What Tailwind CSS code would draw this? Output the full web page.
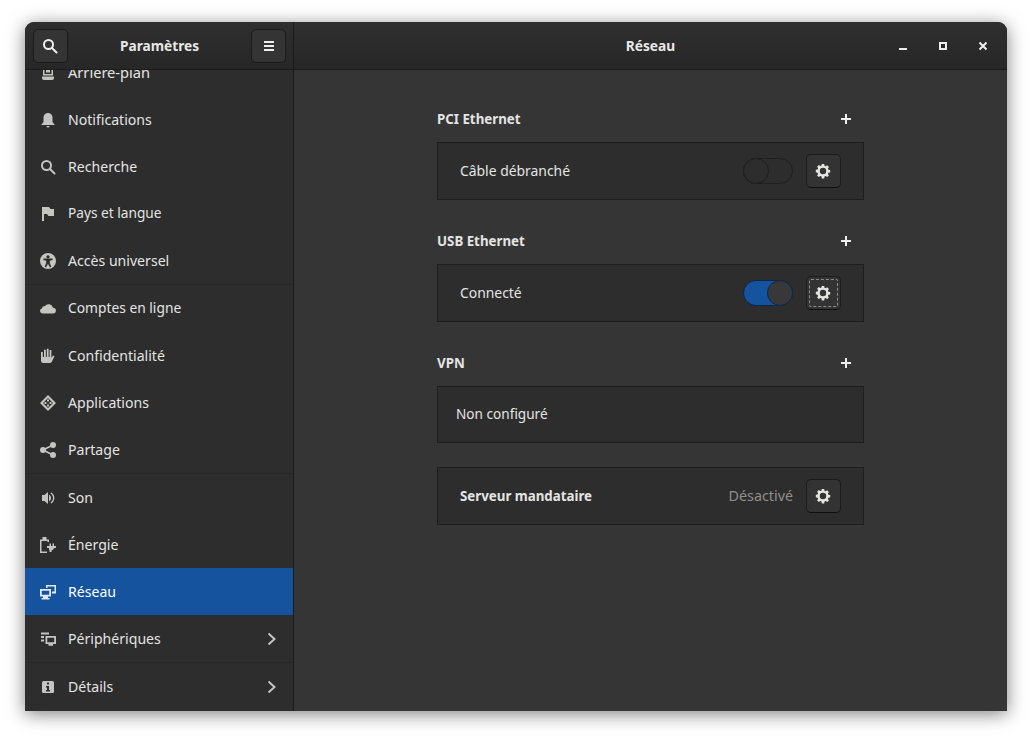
<!DOCTYPE html>
<html lang="fr"><head><meta charset="utf-8"><title>Réseau</title>
<script src="https://cdn.jsdelivr.net/npm/@tailwindcss/browser@4"></script></head>
<body class="w-[1032px] h-[739px] bg-white overflow-hidden pt-[22px] pl-[25px] font-['Noto_Sans',sans-serif] text-[14.1px] text-[#e4e4e2]">
<div class="w-[982px] h-[689px] flex flex-col rounded-t-[9px] overflow-hidden bg-[#353535] shadow-[0_3px_18px_rgba(0,0,0,0.5)]">
  <header class="h-[48px] shrink-0 flex border-b border-[#1b1b1b] bg-gradient-to-b from-[#2f2f2f] to-[#272727]">
    <div class="w-[269px] shrink-0 flex items-center justify-between pl-[8px] pr-[7px] border-r border-[#1b1b1b]">
      <button class="w-[35px] h-[34px] flex items-center justify-center rounded-[5px] border border-[#1b1b1b] bg-[#343434]">
        <svg class="w-4 h-4 -ml-px" viewBox="0 0 16 16" fill="none" stroke="#eee" stroke-width="2"><circle cx="6.500" cy="6.500" r="4.500"/><path d="M10 10l4.500 4.500" stroke-linecap="round"/></svg>
      </button>
      <span class="font-bold text-[13.7px] pt-[2px] text-[#e8e8e6]">Paramètres</span>
      <button class="w-[35px] h-[34px] flex items-center justify-center rounded-[5px] border border-[#1b1b1b] bg-[#343434]">
        <svg class="w-4 h-4" viewBox="0 0 16 16" fill="#eee"><path d="M3 3h10v2H3zM3 7h10v2H3zM3 11h10v2H3z"/></svg>
      </button>
    </div>
    <div class="flex-1 relative flex items-center justify-center">
      <span class="font-bold text-[13.7px] pt-[2px] text-[#e8e8e6]">Réseau</span>
      <div class="absolute right-[16px] top-0 h-full flex items-center gap-[24px]">
        <svg class="w-4 h-4" viewBox="0 0 16 16" fill="#eee"><path d="M4 10h8v2H4z"/></svg>
        <svg class="w-4 h-4" viewBox="0 0 16 16" fill="none" stroke="#eee" stroke-width="2"><path d="M5 5h6v6H5z"/></svg>
        <svg class="w-4 h-4" viewBox="0 0 16 16" fill="none" stroke="#eee" stroke-width="2"><path d="M4.500 4.500l7 7M11.500 4.500l-7 7"/></svg>
      </div>
    </div>
  </header>
  <div class="flex-1 flex min-h-0">
    <aside class="w-[268px] shrink-0 bg-[#2d2d2d] overflow-hidden">
      <ul class="-mt-[21px]">
        <li class="h-[47px] flex items-center pl-[15px] pr-[13px] gap-[12px]"><svg class="w-4 h-4 shrink-0" viewBox="0 0 16 16" fill="#c4c4c2"><path fill-rule="evenodd" d="M3 1h10v9.500H3zM4.500 2.500v6.500h7V2.500z"/><path d="M6 4h4v3.500H6zM2 11.500h12V13a2 2 0 0 1-2 2H4a2 2 0 0 1-2-2z"/></svg><span class="text-[14.6px]">Arrière-plan</span></li>
        <li class="h-[47px] flex items-center pl-[15px] pr-[13px] gap-[12px]"><svg class="w-4 h-4 shrink-0" viewBox="0 0 16 16" fill="#c4c4c2"><path d="M8 1a4.500 4.500 0 0 1 4.500 4.500V10l2 2.500v.5H1.500v-.5l2-2.500V5.500A4.500 4.500 0 0 1 8 1zM6.500 14h3a1.500 1.500 0 0 1-3 0z"/></svg><span>Notifications</span></li>
        <li class="h-[47px] flex items-center pl-[15px] pr-[13px] gap-[12px]"><svg class="w-4 h-4 shrink-0" viewBox="0 0 16 16" fill="none" stroke="#c4c4c2" stroke-width="2"><circle cx="6.500" cy="6.500" r="4.500"/><path d="M10 10l4.500 4.500" stroke-linecap="round"/></svg><span>Recherche</span></li>
        <li class="h-[47px] flex items-center pl-[15px] pr-[13px] gap-[12px]"><svg class="w-4 h-4 shrink-0" viewBox="0 0 16 16" fill="#c4c4c2"><path d="M2 1h7l1.500 2H14v7H8.500L7 8H4v7H2z"/></svg><span class="text-[13.7px]">Pays et langue</span></li>
        <li class="h-[47px] flex items-center pl-[15px] pr-[13px] gap-[12px]"><svg class="w-4 h-4 shrink-0" viewBox="0 0 16 16"><circle cx="8" cy="8" r="8" fill="#c4c4c2"/><circle cx="8" cy="3.800" r="1.600" fill="#2d2d2d"/><path d="M3.500 5.500h9v1.400L9.800 7.700V10l1.500 3.800-1.400.5L8 10.800l-1.900 3.500-1.400-.5L6.200 10V7.700L3.500 6.900z" fill="#2d2d2d"/></svg><span>Accès universel</span></li>
        <li class="h-px bg-[#292929]"></li>
        <li class="h-[47px] flex items-center pl-[15px] pr-[13px] gap-[12px]"><svg class="w-4 h-4 shrink-0" viewBox="0 0 16 16" fill="#c4c4c2"><path d="M2.500 14A2.500 2.500 0 0 1 1.800 9.100 3 3 0 0 1 5 6.500 4.500 4.500 0 0 1 13 8.200 2.900 2.900 0 0 1 13 14z" transform="translate(0 -1.500)"/></svg><span class="text-[13.8px]">Comptes en ligne</span></li>
        <li class="h-[47px] flex items-center pl-[15px] pr-[13px] gap-[12px]"><svg class="w-4 h-4 shrink-0" viewBox="0 0 16 16" fill="#c4c4c2"><path d="M1 4h1.800v5H4V1.800h1.800V9h1V.800h1.800V9h1V2h1.800v8l1.600-2.500 1.500.8-2.500 5.200A2.500 2.500 0 0 1 9.700 15H3.500A2.500 2.500 0 0 1 1 12.500z"/></svg><span>Confidentialité</span></li>
        <li class="h-[47px] flex items-center pl-[15px] pr-[13px] gap-[12px]"><svg class="w-4 h-4 shrink-0" viewBox="0 0 16 16" fill="#c4c4c2"><path fill-rule="evenodd" d="M8 0l8 8-8 8-8-8zM8 3L3 8l5 5 5-5z"/><path d="M7 4.500h2v2H7zM9.500 7h2v2h-2zM4.500 7h2v2h-2zM7 9.500h2v2H7z"/></svg><span>Applications</span></li>
        <li class="h-[47px] flex items-center pl-[15px] pr-[13px] gap-[12px]"><svg class="w-4 h-4 shrink-0" viewBox="0 0 16 16" fill="#c4c4c2"><circle cx="3" cy="8" r="3"/><circle cx="13" cy="3" r="3"/><circle cx="13" cy="13" r="3"/><path d="M3 8l10-5M3 8l10 5" stroke="#c4c4c2" stroke-width="1.500"/></svg><span>Partage</span></li>
        <li class="h-px bg-[#292929]"></li>
        <li class="h-[47px] flex items-center pl-[15px] pr-[13px] gap-[12px]"><svg class="w-4 h-4 shrink-0" viewBox="0 0 16 16" fill="#c4c4c2"><path d="M2 5h2.500L8 2v12L4.500 11H2zM9 4.500a4 4 0 0 1 0 7zM11.300 2.500a6.500 6.500 0 0 1 0 11l-.8-1a5.300 5.300 0 0 0 0-9z"/></svg><span>Son</span></li>
        <li class="h-[47px] flex items-center pl-[15px] pr-[13px] gap-[12px]"><svg class="w-4 h-4 shrink-0" viewBox="0 0 16 16" fill="#c4c4c2"><path d="M0 2.500h2.500V0h4v2.500H9V5H7.500V4h-6v10.500H7V16H0z"/><path d="M7 9h2.500V6.500H11V9h1.500V6.500H14V9h2v2h-2a3 3 0 0 1-2.500 2.500V15h-2v-1.500A3 3 0 0 1 9 11H7z"/></svg><span>Énergie</span></li>
        <li class="h-[47px] flex items-center pl-[15px] pr-[13px] gap-[12px] bg-[#15539e] text-white"><svg class="w-4 h-4 shrink-0" viewBox="0 0 16 16" fill="#dfe7f2"><path d="M6 1h10v8.500h-4V7.500h2.500v-5h-7V4H6z"/><path fill-rule="evenodd" d="M0 5h11v7.500H8V14h1.500v1.500h-8V14H3v-1.500H0zM1.800 6.800v4h7.400v-4z"/></svg><span>Réseau</span></li>
        <li class="h-[47px] flex items-center pl-[15px] pr-[13px] gap-[12px]"><svg class="w-4 h-4 shrink-0" viewBox="0 0 16 16" fill="#c4c4c2"><path d="M1 1.500h8v2H1zM1 5h3v2H1zM1 8.500h3v2H1z"/><path fill-rule="evenodd" d="M5.500 5H16v8h-3v1.800H8.500V13h-3zM7.300 6.800v4.400h6.900V6.800z"/></svg><span class="flex-1">Périphériques</span><svg class="w-4 h-4 shrink-0" viewBox="0 0 16 16" fill="none" stroke="#c4c4c2" stroke-width="2"><path d="M4.500 2.500 10.500 8l-6 5.500"/></svg></li>
        <li class="h-px bg-[#292929]"></li>
        <li class="h-[47px] flex items-center pl-[15px] pr-[13px] gap-[12px]"><svg class="w-4 h-4 shrink-0" viewBox="0 0 16 16"><rect x="2" y="2" width="12" height="12" rx="1.500" fill="#c4c4c2"/><path d="M7 3.500h2v2H7zM6 7h3v4h1v1.500H6V11h1V8.500H6z" fill="#2d2d2d"/></svg><span class="flex-1">Détails</span><svg class="w-4 h-4 shrink-0" viewBox="0 0 16 16" fill="none" stroke="#c4c4c2" stroke-width="2"><path d="M4.500 2.500 10.500 8l-6 5.500"/></svg></li>
      </ul>
    </aside>
    <div class="w-px shrink-0 bg-[#1b1b1b]"></div>
    <main class="flex-1 pt-[37px] pl-[143px] text-[13.9px]">
      <div class="w-[427px] flex flex-col">
        <div class="h-[24px] flex items-center justify-between font-bold pr-[10px]"><span class="text-[13.3px] pt-[2px]">PCI Ethernet</span><svg class="w-4 h-4" viewBox="0 0 16 16" fill="#eee"><path d="M7 3h2v4h4v2H9v4H7V9H3V7h4z"/></svg></div>
        <div class="mt-[11px] h-[58px] flex items-center border border-[#1e1e1e] bg-[#2d2d2d] pl-[22px] pr-[22px]">
          <span class="flex-1">Câble débranché</span>
          <div class="w-[50px] h-[26px] rounded-full border border-[#1f1f1f] bg-[#2d2d2d] relative"><div class="absolute -left-px -top-px w-[26px] h-[26px] rounded-full border border-[#1f1f1f] bg-[#2d2d2d]"></div></div>
          <button class="ml-[13px] w-[35px] h-[34px] flex items-center justify-center rounded-[5px] border border-[#1b1b1b] border-b-[#0f0f0f] bg-[#333333]"><svg class="w-4 h-4 -ml-px" viewBox="0 0 16 16" fill="#e4e4e2"><path fill-rule="evenodd" d="M6.800 1h2.400l.3 1.800 1.200.5 1.500-1 1.700 1.700-1 1.500.5 1.200 1.800.3v2.400l-1.800.3-.5 1.200 1 1.500-1.700 1.700-1.500-1-1.200.5-.3 1.800H6.800l-.3-1.800-1.200-.5-1.500 1-1.700-1.700 1-1.500-.5-1.200L.8 9.200V6.800l1.800-.3.500-1.200-1-1.500 1.700-1.700 1.500 1 1.200-.5zM8 4.800a3.200 3.200 0 1 0 0 6.400 3.200 3.200 0 0 0 0-6.400z"/></svg></button>
        </div>
        <div class="mt-[29px] h-[24px] flex items-center justify-between font-bold pr-[10px]"><span class="text-[13.3px] pt-[2px]">USB Ethernet</span><svg class="w-4 h-4" viewBox="0 0 16 16" fill="#eee"><path d="M7 3h2v4h4v2H9v4H7V9H3V7h4z"/></svg></div>
        <div class="mt-[11px] h-[58px] flex items-center border border-[#1e1e1e] bg-[#2d2d2d] pl-[22px] pr-[22px]">
          <span class="flex-1">Connecté</span>
          <div class="w-[50px] h-[26px] rounded-full border border-[#0d2547] bg-[#15539e] relative"><div class="absolute -right-px -top-px w-[26px] h-[26px] rounded-full border border-[#0d2547] bg-[#383838]"></div></div>
          <button class="ml-[13px] w-[35px] h-[34px] p-[2px] rounded-[5px] border border-[#1b1b1b] border-b-[#0f0f0f] bg-[#333333]"><span class="w-full h-full flex items-center justify-center rounded-[2px] border border-dashed border-[#8a8a8a]"><svg class="w-4 h-4 -ml-px" viewBox="0 0 16 16" fill="#e4e4e2"><path fill-rule="evenodd" d="M6.800 1h2.400l.3 1.800 1.200.5 1.500-1 1.700 1.700-1 1.500.5 1.200 1.800.3v2.400l-1.800.3-.5 1.200 1 1.500-1.700 1.700-1.500-1-1.200.5-.3 1.800H6.800l-.3-1.800-1.200-.5-1.500 1-1.700-1.700 1-1.500-.5-1.200L.8 9.200V6.800l1.800-.3.500-1.200-1-1.500 1.700-1.700 1.500 1 1.200-.5zM8 4.800a3.200 3.200 0 1 0 0 6.400 3.200 3.200 0 0 0 0-6.400z"/></svg></span></button>
        </div>
        <div class="mt-[29px] h-[24px] flex items-center justify-between font-bold pr-[10px]"><span class="text-[13.3px] pt-[2px]">VPN</span><svg class="w-4 h-4" viewBox="0 0 16 16" fill="#eee"><path d="M7 3h2v4h4v2H9v4H7V9H3V7h4z"/></svg></div>
        <div class="mt-[11px] h-[57px] flex items-center border border-[#1e1e1e] bg-[#2d2d2d] pl-[18px] text-[13.6px]">Non configuré</div>
        <div class="mt-[24px] h-[58px] flex items-center border border-[#1e1e1e] bg-[#2d2d2d] pl-[22px] pr-[22px]">
          <span class="flex-1 font-bold text-[13.3px] pt-[2px]">Serveur mandataire</span>
          <span class="text-[#8f8f8d] text-[14.3px]">Désactivé</span>
          <button class="ml-[13px] w-[35px] h-[34px] flex items-center justify-center rounded-[5px] border border-[#1b1b1b] border-b-[#0f0f0f] bg-[#333333]"><svg class="w-4 h-4 -ml-px" viewBox="0 0 16 16" fill="#e4e4e2"><path fill-rule="evenodd" d="M6.800 1h2.400l.3 1.800 1.200.5 1.500-1 1.700 1.700-1 1.500.5 1.200 1.800.3v2.400l-1.800.3-.5 1.200 1 1.500-1.700 1.700-1.500-1-1.200.5-.3 1.800H6.800l-.3-1.800-1.200-.5-1.500 1-1.700-1.700 1-1.500-.5-1.200L.8 9.200V6.800l1.800-.3.500-1.200-1-1.500 1.700-1.700 1.500 1 1.200-.5zM8 4.800a3.200 3.200 0 1 0 0 6.400 3.200 3.200 0 0 0 0-6.400z"/></svg></button>
        </div>
      </div>
    </main>
  </div>
</div>
</body></html>
